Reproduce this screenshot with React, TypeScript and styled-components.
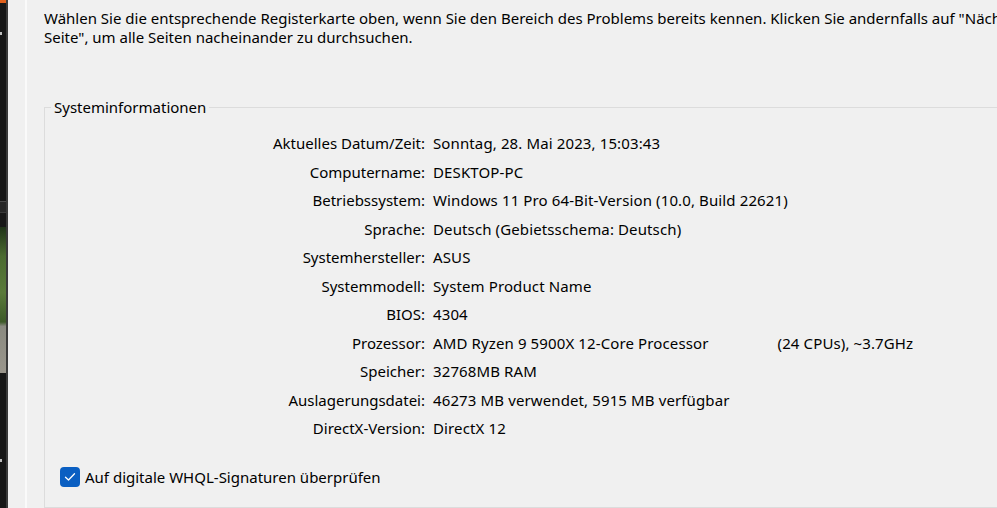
import React from "react";
import styled, { createGlobalStyle } from "styled-components";

const GlobalStyle = createGlobalStyle`
  html, body {
    margin: 0;
    padding: 0;
    background: #f0f0f0;
    overflow: hidden;
  }
  body {
    font-family: "Noto Sans", "Open Sans", sans-serif;
    font-size: 15px;
    color: #000;
  }
`;

type Row = { label: string; value: string; extra?: string };

const rows: Row[] = [
  { label: "Aktuelles Datum/Zeit:", value: "Sonntag, 28. Mai 2023, 15:03:43" },
  { label: "Computername:", value: "DESKTOP-PC" },
  { label: "Betriebssystem:", value: "Windows 11 Pro 64-Bit-Version (10.0, Build 22621)" },
  { label: "Sprache:", value: "Deutsch (Gebietsschema: Deutsch)" },
  { label: "Systemhersteller:", value: "ASUS" },
  { label: "Systemmodell:", value: "System Product Name" },
  { label: "BIOS:", value: "4304" },
  {
    label: "Prozessor:",
    value: "AMD Ryzen 9 5900X 12-Core Processor",
    extra: "(24 CPUs), ~3.7GHz",
  },
  { label: "Speicher:", value: "32768MB RAM" },
  { label: "Auslagerungsdatei:", value: "46273 MB verwendet, 5915 MB verfügbar" },
  { label: "DirectX-Version:", value: "DirectX 12" },
];

export default function App() {
  return (
    <>
      <GlobalStyle />
      <Screen>
        <Desktop>
          <Accent />
          <Marker top={32} />
          <Divider />
          <Photo />
          <Marker top={459} />
        </Desktop>
        <Window>
          <Gutter />
          <Page>
            <Intro>
              Wählen Sie die entsprechende Registerkarte oben, wenn Sie den Bereich des Problems
              bereits kennen. Klicken Sie andernfalls auf "Nächste
              <br />
              Seite", um alle Seiten nacheinander zu durchsuchen.
            </Intro>
            <Group>
              <Legend>Systeminformationen</Legend>
              <InfoGrid>
                {rows.map((r) => (
                  <React.Fragment key={r.label}>
                    <Label>{r.label}</Label>
                    <Value>
                      {r.value}
                      {r.extra && <Extra>{r.extra}</Extra>}
                    </Value>
                  </React.Fragment>
                ))}
              </InfoGrid>
              <CheckRow>
                <CheckBox>
                  <svg width="12" height="10" viewBox="0 0 12 10">
                    <path
                      d="M1.5 5.2 L4.5 8 L10.5 1.8"
                      fill="none"
                      stroke="#fff"
                      strokeWidth="1.3"
                      strokeLinecap="round"
                      strokeLinejoin="round"
                    />
                  </svg>
                </CheckBox>
                <span>Auf digitale WHQL-Signaturen überprüfen</span>
              </CheckRow>
            </Group>
          </Page>
        </Window>
      </Screen>
    </>
  );
}

const Screen = styled.div`
  display: flex;
  width: 997px;
  height: 508px;
  overflow: hidden;
`;

const Desktop = styled.div`
  position: relative;
  width: 6px;
  flex-shrink: 0;
  background: #171717;
  border-right: 2px solid #3a3a3a;
  display: flex;
  flex-direction: column;
`;

const Accent = styled.div`
  height: 3px;
  background: #e0601c;
`;

const Marker = styled.div<{ top: number }>`
  position: absolute;
  left: 0;
  top: ${(p) => p.top}px;
  width: 2px;
  height: 3px;
  background: #bdbdbd;
`;

const Divider = styled.div`
  margin-top: 198px;
  height: 10px;
  background: #262626;
  border-top: 1px solid #4a4a4a;
  border-bottom: 1px solid #3a3a3a;
`;

const Photo = styled.div`
  margin-top: 14px;
  height: 146px;
  background: linear-gradient(
    180deg,
    #1f3318 0%,
    #4b6b30 20%,
    #5a7a3a 45%,
    #3d5a28 65%,
    #8a8a80 68%,
    #9a968c 100%
  );
`;

const Window = styled.div`
  flex: 1;
  display: flex;
  background: #f0f0f0;
  overflow: hidden;
`;

const Gutter = styled.div`
  width: 17px;
  flex-shrink: 0;
  border-right: 2px solid #fafafa;
`;

const Page = styled.div`
  padding-left: 17px;
  min-width: 1100px;
`;

const Intro = styled.p`
  margin: 9px 0 0;
  line-height: 19px;
  white-space: nowrap;
`;

const Group = styled.fieldset`
  margin: 50px 0 0;
  padding: 0 0 16px;
  height: 411px;
  box-sizing: border-box;
  border: 1px solid #dcdcdc;
  width: 1100px;
`;

const Legend = styled.legend`
  margin-left: 6px;
  padding: 0 3px;
  line-height: 20px;
`;

const InfoGrid = styled.div`
  display: grid;
  grid-template-columns: 380px auto;
  column-gap: 8px;
  grid-auto-rows: 28.5px;
  margin-top: 12px;
  align-items: center;
`;

const Label = styled.div`
  text-align: right;
  white-space: nowrap;
`;

const Value = styled.div`
  white-space: nowrap;
  letter-spacing: 0.12px;
`;

const Extra = styled.span`
  margin-left: 69px;
`;

const CheckRow = styled.label`
  display: flex;
  align-items: center;
  gap: 5px;
  margin: 24px 0 0 15px;
`;

const CheckBox = styled.span`
  width: 20px;
  height: 20px;
  border-radius: 4px;
  background: #0a5fc2;
  display: flex;
  align-items: center;
  justify-content: center;
`;
